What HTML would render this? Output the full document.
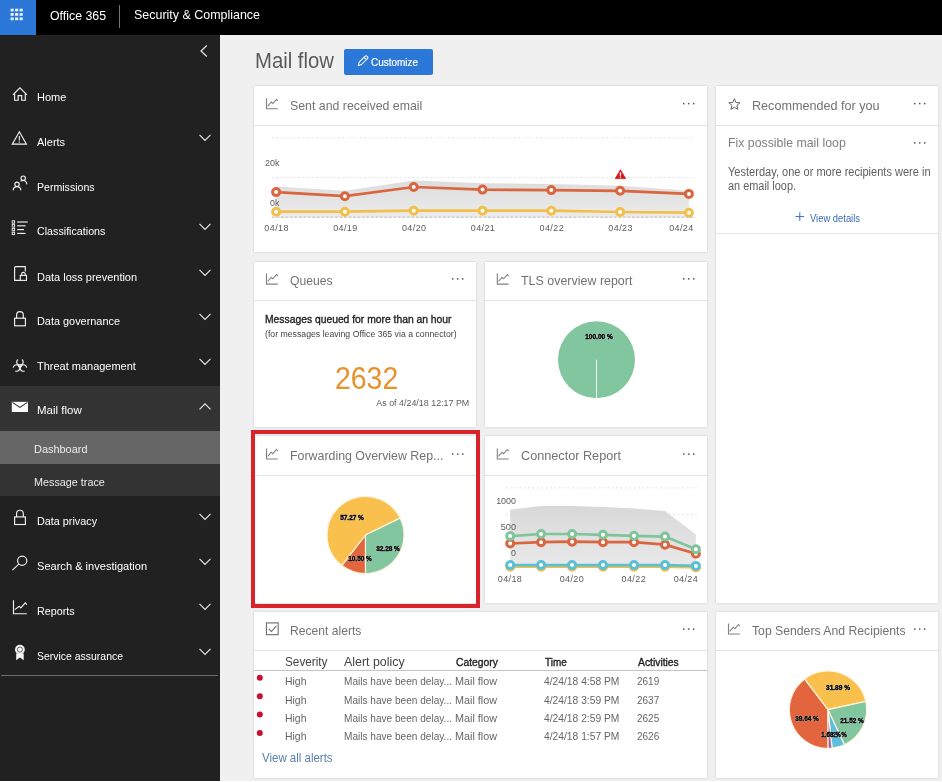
<!DOCTYPE html><html lang="en"><head><meta charset="utf-8"><title>Mail flow</title><style>
*{box-sizing:border-box;margin:0;padding:0}
html,body{width:942px;height:782px;overflow:hidden;background:#fff}
body{position:relative;font-family:"Liberation Sans",sans-serif;color:#333}
.a{position:absolute;white-space:nowrap;line-height:1}
#top{left:0;top:0;width:942px;height:35px;background:#000}
#waf{left:0;top:0;width:36px;height:35px;background:#2b78d8}
#side{left:0;top:35px;width:220px;height:746px;background:#212121}
#main{left:220px;top:35px;width:722px;height:746px;background:#f0f0f0}
.card{background:#fff;box-shadow:0 0 2px rgba(0,0,0,.18)}
.hsep{height:1px;background:#e3e3e3}
.nav{color:#fff;font-size:11.3px}
.ct{color:#727272;font-size:13.3px}
.dots{color:#555;font-size:12px;letter-spacing:1.5px;font-weight:bold}
svg{position:absolute;overflow:visible}
</style></head><body><div id="L" style="position:absolute;left:0;top:0;width:942px;height:782px;will-change:transform">
<div class="a" id="top"></div><div class="a" id="waf"></div>
<svg style="left:0;top:0" width="36" height="35"><rect x="10.6" y="8.7" width="3.1" height="2.7" fill="#eaf5ff"/><rect x="15.1" y="8.7" width="3.1" height="2.7" fill="#eaf5ff"/><rect x="19.6" y="8.7" width="3.1" height="2.7" fill="#eaf5ff"/><rect x="10.6" y="13.1" width="3.1" height="2.7" fill="#eaf5ff"/><rect x="15.1" y="13.1" width="3.1" height="2.7" fill="#eaf5ff"/><rect x="19.6" y="13.1" width="3.1" height="2.7" fill="#eaf5ff"/><rect x="10.6" y="17.5" width="3.1" height="2.7" fill="#eaf5ff"/><rect x="15.1" y="17.5" width="3.1" height="2.7" fill="#eaf5ff"/><rect x="19.6" y="17.5" width="3.1" height="2.7" fill="#eaf5ff"/></svg>
<div class="a" id="o365" style="left:49.5px;top:8.5px;color:#fff;font-size:13.3px;transform:scaleX(0.9275);transform-origin:left center">Office 365</div>
<div class="a" style="left:119px;top:5px;width:1px;height:23px;background:#767676"></div>
<div class="a" id="sc" style="left:133.5px;top:9.2px;color:#fff;font-size:12.2px;transform:scaleX(1.0221);transform-origin:left center">Security &amp; Compliance</div>
<div class="a" id="side"></div><div class="a" id="main"></div>
<div class="a" style="left:0;top:386px;width:220px;height:110.3px;background:#333"></div>
<div class="a" style="left:0;top:431.4px;width:220px;height:32.8px;background:#666"></div>
<div class="a" style="left:1px;top:675px;width:217px;height:1px;background:#6a6a6a"></div>
<svg style="left:200px;top:45px" width="8" height="12"><path d="M6.8 0.5 L1 6 L6.8 11.5" fill="none" stroke="#e6e6e6" stroke-width="1.2"/></svg>
<div class="a nav" id="n0" style="left:37px;top:91.8px;transform:scaleX(0.9721);transform-origin:left center">Home</div>
<div class="a nav" id="n1" style="left:37px;top:136.8px;transform:scaleX(0.9726);transform-origin:left center">Alerts</div>
<svg style="left:199px;top:133.8px" width="12" height="7"><path d="M0.5 0.8 L6 6.3 L11.5 0.8" fill="none" stroke="#e6e6e6" stroke-width="1.2"/></svg>
<div class="a nav" id="n2" style="left:37px;top:181.8px;transform:scaleX(0.9361);transform-origin:left center">Permissions</div>
<div class="a nav" id="n3" style="left:37px;top:226.4px;transform:scaleX(0.9473);transform-origin:left center">Classifications</div>
<svg style="left:199px;top:223.4px" width="12" height="7"><path d="M0.5 0.8 L6 6.3 L11.5 0.8" fill="none" stroke="#e6e6e6" stroke-width="1.2"/></svg>
<div class="a nav" id="n4" style="left:37px;top:271.6px;transform:scaleX(0.9718);transform-origin:left center">Data loss prevention</div>
<svg style="left:199px;top:268.6px" width="12" height="7"><path d="M0.5 0.8 L6 6.3 L11.5 0.8" fill="none" stroke="#e6e6e6" stroke-width="1.2"/></svg>
<div class="a nav" id="n5" style="left:37px;top:316.3px;transform:scaleX(0.9646);transform-origin:left center">Data governance</div>
<svg style="left:199px;top:313.3px" width="12" height="7"><path d="M0.5 0.8 L6 6.3 L11.5 0.8" fill="none" stroke="#e6e6e6" stroke-width="1.2"/></svg>
<div class="a nav" id="n6" style="left:37px;top:360.8px;transform:scaleX(0.9721);transform-origin:left center">Threat management</div>
<svg style="left:199px;top:357.8px" width="12" height="7"><path d="M0.5 0.8 L6 6.3 L11.5 0.8" fill="none" stroke="#e6e6e6" stroke-width="1.2"/></svg>
<div class="a nav" id="n7" style="left:37px;top:405.2px;transform:scaleX(1.017);transform-origin:left center">Mail flow</div>
<svg style="left:199px;top:403.1px" width="12" height="7"><path d="M0.5 6.3 L6 0.8 L11.5 6.3" fill="none" stroke="#e6e6e6" stroke-width="1.2"/></svg>
<div class="a nav" id="n8" style="left:37px;top:515.6px;transform:scaleX(0.9571);transform-origin:left center">Data privacy</div>
<svg style="left:199px;top:512.6px" width="12" height="7"><path d="M0.5 0.8 L6 6.3 L11.5 0.8" fill="none" stroke="#e6e6e6" stroke-width="1.2"/></svg>
<div class="a nav" id="n9" style="left:37px;top:560.8px;transform:scaleX(0.9795);transform-origin:left center">Search &amp; investigation</div>
<svg style="left:199px;top:557.8px" width="12" height="7"><path d="M0.5 0.8 L6 6.3 L11.5 0.8" fill="none" stroke="#e6e6e6" stroke-width="1.2"/></svg>
<div class="a nav" id="n10" style="left:37px;top:605.8px;transform:scaleX(0.9504);transform-origin:left center">Reports</div>
<svg style="left:199px;top:602.8px" width="12" height="7"><path d="M0.5 0.8 L6 6.3 L11.5 0.8" fill="none" stroke="#e6e6e6" stroke-width="1.2"/></svg>
<div class="a nav" id="n11" style="left:37px;top:651.1px;transform:scaleX(0.9254);transform-origin:left center">Service assurance</div>
<svg style="left:199px;top:648.1px" width="12" height="7"><path d="M0.5 0.8 L6 6.3 L11.5 0.8" fill="none" stroke="#e6e6e6" stroke-width="1.2"/></svg>
<div class="a nav" id="s0" style="color:#ececec;left:34px;top:444.1px;transform:scaleX(0.9681);transform-origin:left center">Dashboard</div>
<div class="a nav" id="s1" style="color:#ececec;left:34px;top:477.1px;transform:scaleX(0.9555);transform-origin:left center">Message trace</div>
<div class="a" id="ttl" style="left:255.3px;top:50.5px;font-size:21.5px;color:#5a5a5a;transform:scaleX(0.9445);transform-origin:left center">Mail flow</div>
<div class="a" style="left:344px;top:49px;width:89px;height:25.6px;background:#2b78d8;border-radius:2px"></div>
<div class="a" id="cust" style="left:371.2px;top:57px;font-size:11px;color:#fff;-webkit-text-stroke:0.2px #fff;transform:scaleX(0.9044);transform-origin:left center">Customize</div>
<div class="a card" style="left:254.0px;top:86.0px;width:453.4px;height:166.2px"></div>
<div class="a hsep" style="left:254.0px;top:125.0px;width:453.4px"></div>
<div class="a ct" id="t_sent" style="left:290.3px;top:98.7px;transform:scaleX(0.9274);transform-origin:left center">Sent and received email</div>
<div class="a card" style="left:716.0px;top:86.0px;width:222.4px;height:517.0px"></div>
<div class="a hsep" style="left:716.0px;top:125.0px;width:222.4px"></div>
<div class="a ct" id="t_rec" style="left:752.3px;top:98.7px;transform:scaleX(0.9478);transform-origin:left center">Recommended for you</div>
<div class="a card" style="left:254.0px;top:262.0px;width:222.4px;height:165.1px"></div>
<div class="a hsep" style="left:254.0px;top:300.0px;width:222.4px"></div>
<div class="a ct" id="t_q" style="left:290.3px;top:274.0px;transform:scaleX(0.9146);transform-origin:left center">Queues</div>
<div class="a card" style="left:484.8px;top:262.0px;width:222.6px;height:165.1px"></div>
<div class="a hsep" style="left:484.8px;top:300.0px;width:222.6px"></div>
<div class="a ct" id="t_tls" style="left:521.1px;top:274.0px;transform:scaleX(0.9363);transform-origin:left center">TLS overview report</div>
<div class="a card" style="left:254.0px;top:436.0px;width:222.4px;height:167.0px"></div>
<div class="a hsep" style="left:254.0px;top:475.0px;width:222.4px"></div>
<div class="a ct" id="t_fwd" style="left:290.3px;top:449.2px;transform:scaleX(0.9308);transform-origin:left center">Forwarding Overview Rep...</div>
<div class="a card" style="left:484.8px;top:436.0px;width:222.6px;height:167.0px"></div>
<div class="a hsep" style="left:484.8px;top:475.0px;width:222.6px"></div>
<div class="a ct" id="t_con" style="left:521.1px;top:449.2px;transform:scaleX(0.9527);transform-origin:left center">Connector Report</div>
<div class="a card" style="left:254.0px;top:611.5px;width:453.4px;height:166.5px"></div>
<div class="a hsep" style="left:254.0px;top:650.0px;width:453.4px"></div>
<div class="a ct" id="t_al" style="left:290.3px;top:624.2px;transform:scaleX(0.9114);transform-origin:left center">Recent alerts</div>
<div class="a card" style="left:716.0px;top:611.5px;width:222.4px;height:166.5px"></div>
<div class="a hsep" style="left:716.0px;top:650.0px;width:222.4px"></div>
<div class="a ct" id="t_top" style="left:752.3px;top:624.2px;transform:scaleX(0.9188);transform-origin:left center">Top Senders And Recipients</div>
<div class="a" style="left:250.6px;top:429.6px;width:229.3px;height:178.8px;border:4px solid #d9222a"></div>
<svg style="left:0;top:0" width="942" height="782" viewBox="0 0 942 782"><path d="M266.50 98.20 V108.80 H277.80" fill="none" stroke="#808080" stroke-width="1.1"/><path d="M267.70 106.20 L271.20 102.00 L272.80 103.50 L276.50 99.30 L277.80 100.90" fill="none" stroke="#808080" stroke-width="1.05"/><path d="M266.50 273.50 V284.10 H277.80" fill="none" stroke="#808080" stroke-width="1.1"/><path d="M267.70 281.50 L271.20 277.30 L272.80 278.80 L276.50 274.60 L277.80 276.20" fill="none" stroke="#808080" stroke-width="1.05"/><path d="M497.30 273.50 V284.10 H508.60" fill="none" stroke="#808080" stroke-width="1.1"/><path d="M498.50 281.50 L502.00 277.30 L503.60 278.80 L507.30 274.60 L508.60 276.20" fill="none" stroke="#808080" stroke-width="1.05"/><path d="M266.50 448.40 V459.00 H277.80" fill="none" stroke="#808080" stroke-width="1.1"/><path d="M267.70 456.40 L271.20 452.20 L272.80 453.70 L276.50 449.50 L277.80 451.10" fill="none" stroke="#808080" stroke-width="1.05"/><path d="M497.30 448.40 V459.00 H508.60" fill="none" stroke="#808080" stroke-width="1.1"/><path d="M498.50 456.40 L502.00 452.20 L503.60 453.70 L507.30 449.50 L508.60 451.10" fill="none" stroke="#808080" stroke-width="1.05"/><path d="M728.50 623.40 V634.00 H739.80" fill="none" stroke="#808080" stroke-width="1.1"/><path d="M729.70 631.40 L733.20 627.20 L734.80 628.70 L738.50 624.50 L739.80 626.10" fill="none" stroke="#808080" stroke-width="1.05"/><polygon points="734.40,98.70 735.93,102.50 740.01,102.78 736.87,105.40 737.87,109.37 734.40,107.20 730.93,109.37 731.93,105.40 728.79,102.78 732.87,102.50" fill="none" stroke="#666" stroke-width="1.0" stroke-linejoin="miter"/><rect x="266.4" y="622.9" width="11.8" height="11.8" fill="none" stroke="#6b6b6b" stroke-width="1.1"/><path d="M268.8 628.8 l2.6 2.7 l5 -5.6" fill="none" stroke="#6b6b6b" stroke-width="1.1"/><defs><linearGradient id="g1" x1="0" y1="0" x2="0" y2="1"><stop offset="0" stop-color="#dcdcdc"/><stop offset="1" stop-color="#ececec"/></linearGradient><linearGradient id="g2" x1="0" y1="0" x2="0" y2="1"><stop offset="0" stop-color="#d8d8d8"/><stop offset="1" stop-color="#e9e9e9"/></linearGradient></defs><line x1="271.8" y1="137.8" x2="694.6" y2="137.8" stroke="#e2e2e2" stroke-width="1" stroke-dasharray="2,2.4"/><line x1="271.8" y1="177.6" x2="694.6" y2="177.6" stroke="#e2e2e2" stroke-width="1" stroke-dasharray="2,2.4"/><polygon points="276.1,186.5 344.9,190.8 413.7,180.6 482.5,183.2 551.3,184.0 620.1,185.7 688.9,190.8 688.9,217 276.1,217" fill="url(#g1)"/><line x1="271.8" y1="217.2" x2="694.6" y2="217.2" stroke="#b5b5b5" stroke-width="1" stroke-dasharray="3,1.5"/><polyline points="276.1,211.7 344.9,211.7 413.7,210.7 482.5,210.7 551.3,210.7 620.1,212.0 688.9,212.7" fill="none" stroke="#f3bf4b" stroke-width="2.7"/><circle cx="276.1" cy="211.7" r="3.5" fill="#fff" stroke="#f3bf4b" stroke-width="3.0"/><circle cx="344.9" cy="211.7" r="3.5" fill="#fff" stroke="#f3bf4b" stroke-width="3.0"/><circle cx="413.7" cy="210.7" r="3.5" fill="#fff" stroke="#f3bf4b" stroke-width="3.0"/><circle cx="482.5" cy="210.7" r="3.5" fill="#fff" stroke="#f3bf4b" stroke-width="3.0"/><circle cx="551.3" cy="210.7" r="3.5" fill="#fff" stroke="#f3bf4b" stroke-width="3.0"/><circle cx="620.1" cy="212.0" r="3.5" fill="#fff" stroke="#f3bf4b" stroke-width="3.0"/><circle cx="688.9" cy="212.7" r="3.5" fill="#fff" stroke="#f3bf4b" stroke-width="3.0"/><polyline points="276.1,192.1 344.9,196.2 413.7,187.0 482.5,189.6 551.3,190.1 620.1,190.8 688.9,193.9" fill="none" stroke="#d9663f" stroke-width="2.7"/><circle cx="276.1" cy="192.1" r="3.5" fill="#fff" stroke="#d9663f" stroke-width="3.0"/><circle cx="344.9" cy="196.2" r="3.5" fill="#fff" stroke="#d9663f" stroke-width="3.0"/><circle cx="413.7" cy="187.0" r="3.5" fill="#fff" stroke="#d9663f" stroke-width="3.0"/><circle cx="482.5" cy="189.6" r="3.5" fill="#fff" stroke="#d9663f" stroke-width="3.0"/><circle cx="551.3" cy="190.1" r="3.5" fill="#fff" stroke="#d9663f" stroke-width="3.0"/><circle cx="620.1" cy="190.8" r="3.5" fill="#fff" stroke="#d9663f" stroke-width="3.0"/><circle cx="688.9" cy="193.9" r="3.5" fill="#fff" stroke="#d9663f" stroke-width="3.0"/><path d="M620.45 169.8 L625.6 178.6 L615.3 178.6 Z" fill="#d8141c" stroke="#d8141c" stroke-width="0.8" stroke-linejoin="round"/><rect x="619.8" y="172.2" width="1.3" height="3.6" fill="#fff"/><rect x="619.8" y="176.6" width="1.3" height="1.3" fill="#fff"/><circle cx="596.5" cy="359.7" r="38.5" fill="#82c6a0"/><line x1="596.5" y1="359.7" x2="596.5" y2="398" stroke="#fff" stroke-width="0.9"/><path d="M365.50 535.00 L365.50 573.50 A38.50 38.50 0 0 1 341.90 565.42 Z" fill="#e2653e" stroke="#fff3dc" stroke-width="1.2" stroke-linejoin="round"/><path d="M365.50 535.00 L341.90 565.42 A38.50 38.50 0 1 1 400.10 518.11 Z" fill="#f9c04d" stroke="#fff3dc" stroke-width="1.2" stroke-linejoin="round"/><path d="M365.50 535.00 L400.10 518.11 A38.50 38.50 0 0 1 365.50 573.50 Z" fill="#82c6a0" stroke="#fff3dc" stroke-width="1.2" stroke-linejoin="round"/><path d="M828.00 709.70 L828.00 748.40 A38.70 38.70 0 0 1 804.55 678.91 Z" fill="#e2653e" stroke="#fff3dc" stroke-width="1.2" stroke-linejoin="round"/><path d="M828.00 709.70 L804.55 678.91 A38.70 38.70 0 0 1 865.78 701.33 Z" fill="#f9c04d" stroke="#fff3dc" stroke-width="1.2" stroke-linejoin="round"/><path d="M828.00 709.70 L865.78 701.33 A38.70 38.70 0 0 1 844.37 744.77 Z" fill="#82c6a0" stroke="#fff3dc" stroke-width="1.2" stroke-linejoin="round"/><path d="M828.00 709.70 L844.37 744.77 A38.70 38.70 0 0 1 832.08 748.18 Z" fill="#5bbfe0" stroke="#fff3dc" stroke-width="1.2" stroke-linejoin="round"/><path d="M828.00 709.70 L832.08 748.18 A38.70 38.70 0 0 1 828.00 748.40 Z" fill="#9b6aa8" stroke="#fff3dc" stroke-width="1.2" stroke-linejoin="round"/><line x1="506" y1="487.9" x2="699" y2="487.9" stroke="#e2e2e2" stroke-width="1" stroke-dasharray="2,2.4"/><line x1="506" y1="514.7" x2="699" y2="514.7" stroke="#e2e2e2" stroke-width="1" stroke-dasharray="2,2.4"/><polygon points="510.2,509.8 541.1,506.0 572.1,506.0 603.0,507.0 634.0,508.6 665.0,511.1 695.9,534.6 695.9,567 510.2,567" fill="url(#g2)"/><polyline points="510.2,566.7 541.1,566.7 572.1,566.7 603.0,566.7 634.0,566.7 665.0,566.7 695.9,567.5" fill="none" stroke="#f3bf4b" stroke-width="2.7"/><circle cx="510.2" cy="566.7" r="3.5" fill="#fff" stroke="#f3bf4b" stroke-width="3.0"/><circle cx="541.1" cy="566.7" r="3.5" fill="#fff" stroke="#f3bf4b" stroke-width="3.0"/><circle cx="572.1" cy="566.7" r="3.5" fill="#fff" stroke="#f3bf4b" stroke-width="3.0"/><circle cx="603.0" cy="566.7" r="3.5" fill="#fff" stroke="#f3bf4b" stroke-width="3.0"/><circle cx="634.0" cy="566.7" r="3.5" fill="#fff" stroke="#f3bf4b" stroke-width="3.0"/><circle cx="665.0" cy="566.7" r="3.5" fill="#fff" stroke="#f3bf4b" stroke-width="3.0"/><circle cx="695.9" cy="567.5" r="3.5" fill="#fff" stroke="#f3bf4b" stroke-width="3.0"/><polyline points="510.2,543.5 541.1,542.2 572.1,541.7 603.0,542.2 634.0,542.2 665.0,544.7 695.9,553.7" fill="none" stroke="#d9663f" stroke-width="2.7"/><circle cx="510.2" cy="543.5" r="3.5" fill="#fff" stroke="#d9663f" stroke-width="3.0"/><circle cx="541.1" cy="542.2" r="3.5" fill="#fff" stroke="#d9663f" stroke-width="3.0"/><circle cx="572.1" cy="541.7" r="3.5" fill="#fff" stroke="#d9663f" stroke-width="3.0"/><circle cx="603.0" cy="542.2" r="3.5" fill="#fff" stroke="#d9663f" stroke-width="3.0"/><circle cx="634.0" cy="542.2" r="3.5" fill="#fff" stroke="#d9663f" stroke-width="3.0"/><circle cx="665.0" cy="544.7" r="3.5" fill="#fff" stroke="#d9663f" stroke-width="3.0"/><circle cx="695.9" cy="553.7" r="3.5" fill="#fff" stroke="#d9663f" stroke-width="3.0"/><polyline points="510.2,536.1 541.1,534.0 572.1,534.0 603.0,534.8 634.0,535.8 665.0,536.6 695.9,549.3" fill="none" stroke="#7fc49c" stroke-width="2.7"/><circle cx="510.2" cy="536.1" r="3.5" fill="#fff" stroke="#7fc49c" stroke-width="3.0"/><circle cx="541.1" cy="534.0" r="3.5" fill="#fff" stroke="#7fc49c" stroke-width="3.0"/><circle cx="572.1" cy="534.0" r="3.5" fill="#fff" stroke="#7fc49c" stroke-width="3.0"/><circle cx="603.0" cy="534.8" r="3.5" fill="#fff" stroke="#7fc49c" stroke-width="3.0"/><circle cx="634.0" cy="535.8" r="3.5" fill="#fff" stroke="#7fc49c" stroke-width="3.0"/><circle cx="665.0" cy="536.6" r="3.5" fill="#fff" stroke="#7fc49c" stroke-width="3.0"/><circle cx="695.9" cy="549.3" r="3.5" fill="#fff" stroke="#7fc49c" stroke-width="3.0"/><polyline points="510.2,565.1 541.1,565.1 572.1,565.1 603.0,565.1 634.0,565.1 665.0,565.1 695.9,565.9" fill="none" stroke="#5bbfd6" stroke-width="2.7"/><circle cx="510.2" cy="565.1" r="3.5" fill="#fff" stroke="#5bbfd6" stroke-width="3.0"/><circle cx="541.1" cy="565.1" r="3.5" fill="#fff" stroke="#5bbfd6" stroke-width="3.0"/><circle cx="572.1" cy="565.1" r="3.5" fill="#fff" stroke="#5bbfd6" stroke-width="3.0"/><circle cx="603.0" cy="565.1" r="3.5" fill="#fff" stroke="#5bbfd6" stroke-width="3.0"/><circle cx="634.0" cy="565.1" r="3.5" fill="#fff" stroke="#5bbfd6" stroke-width="3.0"/><circle cx="665.0" cy="565.1" r="3.5" fill="#fff" stroke="#5bbfd6" stroke-width="3.0"/><circle cx="695.9" cy="565.9" r="3.5" fill="#fff" stroke="#5bbfd6" stroke-width="3.0"/><line x1="254" y1="670.5" x2="707.4" y2="670.5" stroke="#c4c4c4" stroke-width="1"/><circle cx="259.8" cy="677.7" r="3" fill="#c8102e"/><circle cx="259.8" cy="696.3" r="3" fill="#c8102e"/><circle cx="259.8" cy="714.6" r="3" fill="#c8102e"/><circle cx="259.8" cy="733.0" r="3" fill="#c8102e"/><path d="M795.5 216.6 h8.6 M799.8 212.3 v8.6" stroke="#3b6fb5" stroke-width="1" fill="none"/><path transform="translate(-0.9,-1.2)" d="M359.2 66.6 l0.9 -3.2 l6.1 -6.1 a1.1 1.1 0 0 1 1.6 0 l0.7 0.7 a1.1 1.1 0 0 1 0 1.6 l-6.1 6.1 Z M365 58.6 l2.3 2.3" fill="none" stroke="#fff" stroke-width="1.05" stroke-linejoin="round"/></svg>
<svg style="left:0;top:0" width="942" height="782" viewBox="0 0 942 782"><rect x="682.95" y="102.85" width="1.5" height="1.5" fill="#555"/><rect x="687.95" y="102.85" width="1.5" height="1.5" fill="#555"/><rect x="692.95" y="102.85" width="1.5" height="1.5" fill="#555"/><rect x="913.95" y="102.85" width="1.5" height="1.5" fill="#555"/><rect x="918.95" y="102.85" width="1.5" height="1.5" fill="#555"/><rect x="923.95" y="102.85" width="1.5" height="1.5" fill="#555"/><rect x="451.95" y="278.15" width="1.5" height="1.5" fill="#555"/><rect x="456.95" y="278.15" width="1.5" height="1.5" fill="#555"/><rect x="461.95" y="278.15" width="1.5" height="1.5" fill="#555"/><rect x="682.95" y="278.15" width="1.5" height="1.5" fill="#555"/><rect x="687.95" y="278.15" width="1.5" height="1.5" fill="#555"/><rect x="692.95" y="278.15" width="1.5" height="1.5" fill="#555"/><rect x="451.95" y="453.35" width="1.5" height="1.5" fill="#555"/><rect x="456.95" y="453.35" width="1.5" height="1.5" fill="#555"/><rect x="461.95" y="453.35" width="1.5" height="1.5" fill="#555"/><rect x="682.95" y="453.35" width="1.5" height="1.5" fill="#555"/><rect x="687.95" y="453.35" width="1.5" height="1.5" fill="#555"/><rect x="692.95" y="453.35" width="1.5" height="1.5" fill="#555"/><rect x="682.95" y="628.35" width="1.5" height="1.5" fill="#555"/><rect x="687.95" y="628.35" width="1.5" height="1.5" fill="#555"/><rect x="692.95" y="628.35" width="1.5" height="1.5" fill="#555"/><rect x="913.95" y="628.35" width="1.5" height="1.5" fill="#555"/><rect x="918.95" y="628.35" width="1.5" height="1.5" fill="#555"/><rect x="923.95" y="628.35" width="1.5" height="1.5" fill="#555"/><rect x="913.95" y="142.15" width="1.5" height="1.5" fill="#555"/><rect x="918.95" y="142.15" width="1.5" height="1.5" fill="#555"/><rect x="923.95" y="142.15" width="1.5" height="1.5" fill="#555"/></svg>
<div class="a" id="l20k" style="right:662.4px;top:159.0px;font-size:9px;color:#5c5c5c;;transform:scaleX(0.9989);transform-origin:right center">20k</div>
<div class="a" id="l0k" style="right:662.4px;top:198.5px;font-size:9px;color:#5c5c5c;;transform:scaleX(0.9878);transform-origin:right center">0k</div>
<div class="a" id="sx0" style="left:236.6px;top:224.0px;width:80px;text-align:center;font-size:9px;color:#5c5c5c;letter-spacing:0.4px">04/18</div>
<div class="a" id="sx1" style="left:305.4px;top:224.0px;width:80px;text-align:center;font-size:9px;color:#5c5c5c;letter-spacing:0.4px">04/19</div>
<div class="a" id="sx2" style="left:374.2px;top:224.0px;width:80px;text-align:center;font-size:9px;color:#5c5c5c;letter-spacing:0.4px">04/20</div>
<div class="a" id="sx3" style="left:443.0px;top:224.0px;width:80px;text-align:center;font-size:9px;color:#5c5c5c;letter-spacing:0.4px">04/21</div>
<div class="a" id="sx4" style="left:511.8px;top:224.0px;width:80px;text-align:center;font-size:9px;color:#5c5c5c;letter-spacing:0.4px">04/22</div>
<div class="a" id="sx5" style="left:580.6px;top:224.0px;width:80px;text-align:center;font-size:9px;color:#5c5c5c;letter-spacing:0.4px">04/23</div>
<div class="a" id="sx6" style="left:641.4px;top:224.0px;width:80px;text-align:center;font-size:9px;color:#5c5c5c;letter-spacing:0.4px">04/24</div>
<div class="a" id="q1" style="left:265.4px;top:314.0px;font-size:11px;color:#222;-webkit-text-stroke:0.35px #222;transform:scaleX(0.9384);transform-origin:left center">Messages queued for more than an hour</div>
<div class="a" id="q2" style="left:265.4px;top:330.2px;font-size:8.5px;color:#444;;transform:scaleX(1.0249);transform-origin:left center">(for messages leaving Office 365 via a connector)</div>
<div class="a" id="q3" style="left:335.4px;top:362.0px;font-size:32px;color:#e8912d;;transform:scaleX(0.8878);transform-origin:left center">2632</div>
<div class="a" id="q4" style="right:472.6px;top:398.2px;font-size:9.6px;color:#5e5e5e;;transform:scaleX(0.9274);transform-origin:right center">As of 4/24/18 12:17 PM</div>
<div class="a" id="p1" style="left:558.8px;top:333.3px;width:80px;text-align:center;font-size:7px;color:#000;font-weight:bold;-webkit-text-stroke:0.45px #000;text-shadow:0 0 1px #fff,0 0 1.5px #fff;;transform:scaleX(0.9326);transform-origin:center center">100.00 %</div>
<div class="a" id="p2" style="left:312.0px;top:514.3px;width:80px;text-align:center;font-size:7px;color:#000;font-weight:bold;-webkit-text-stroke:0.45px #000;text-shadow:0 0 1px #fff,0 0 1.5px #fff;;transform:scaleX(0.9226);transform-origin:center center">57.27 %</div>
<div class="a" id="p3" style="left:347.7px;top:545.4px;width:80px;text-align:center;font-size:7px;color:#000;font-weight:bold;-webkit-text-stroke:0.45px #000;text-shadow:0 0 1px #fff,0 0 1.5px #fff;;transform:scaleX(0.9226);transform-origin:center center">32.28 %</div>
<div class="a" id="p4" style="left:319.8px;top:555.0px;width:80px;text-align:center;font-size:7px;color:#000;font-weight:bold;-webkit-text-stroke:0.45px #000;text-shadow:0 0 1px #fff,0 0 1.5px #fff;;transform:scaleX(0.9226);transform-origin:center center">10.50 %</div>
<div class="a" id="p5" style="left:798.3px;top:684.1px;width:80px;text-align:center;font-size:7px;color:#000;font-weight:bold;-webkit-text-stroke:0.45px #000;text-shadow:0 0 1px #fff,0 0 1.5px #fff;;transform:scaleX(0.9343);transform-origin:center center">31.89 %</div>
<div class="a" id="p6" style="left:766.9px;top:715.1px;width:80px;text-align:center;font-size:7px;color:#000;font-weight:bold;-webkit-text-stroke:0.45px #000;text-shadow:0 0 1px #fff,0 0 1.5px #fff;;transform:scaleX(0.9187);transform-origin:center center">39.64 %</div>
<div class="a" id="p7" style="left:811.6px;top:716.8px;width:80px;text-align:center;font-size:7px;color:#000;font-weight:bold;-webkit-text-stroke:0.45px #000;text-shadow:0 0 1px #fff,0 0 1.5px #fff;;transform:scaleX(0.9187);transform-origin:center center">21.52 %</div>
<div class="a" id="p9" style="left:797.1px;top:731.0px;width:80px;text-align:center;font-size:7px;color:#000;font-weight:bold;-webkit-text-stroke:0.45px #000;text-shadow:0 0 1px #fff,0 0 1.5px #fff;;transform:scaleX(0.89);transform-origin:center center">5.27 %</div>
<div class="a" id="p8" style="left:791.0px;top:731.0px;width:80px;text-align:center;font-size:7px;color:#000;font-weight:bold;-webkit-text-stroke:0.45px #000;text-shadow:0 0 1px #fff,0 0 1.5px #fff;;transform:scaleX(0.89);transform-origin:center center">1.68 %</div>
<div class="a" id="c1" style="right:426.0px;top:496.6px;font-size:9px;color:#5c5c5c;;transform:scaleX(0.9934);transform-origin:right center">1000</div>
<div class="a" id="c2" style="right:426.0px;top:523.2px;font-size:9px;color:#5c5c5c;;transform:scaleX(1.0179);transform-origin:right center">500</div>
<div class="a" id="c3" style="right:426.0px;top:549.2px;font-size:9px;color:#5c5c5c;;transform:scaleX(0.9969);transform-origin:right center">0</div>
<div class="a" id="cx0" style="left:470.0px;top:574.8px;width:80px;text-align:center;font-size:9px;color:#5c5c5c;letter-spacing:0.4px">04/18</div>
<div class="a" id="cx2" style="left:531.9px;top:574.8px;width:80px;text-align:center;font-size:9px;color:#5c5c5c;letter-spacing:0.4px">04/20</div>
<div class="a" id="cx4" style="left:593.8px;top:574.8px;width:80px;text-align:center;font-size:9px;color:#5c5c5c;letter-spacing:0.4px">04/22</div>
<div class="a" id="cx6" style="left:645.9px;top:574.8px;width:80px;text-align:center;font-size:9px;color:#5c5c5c;letter-spacing:0.4px">04/24</div>
<div class="a" id="r1" style="left:728.1px;top:136.2px;font-size:13.3px;color:#808080;;transform:scaleX(0.9266);transform-origin:left center">Fix possible mail loop</div>
<div class="a" id="r2" style="left:728.1px;top:166.3px;font-size:12px;color:#606060;;transform:scaleX(0.9204);transform-origin:left center">Yesterday, one or more recipients were in</div>
<div class="a" id="r3" style="left:728.1px;top:180.3px;font-size:12px;color:#606060;;transform:scaleX(0.9101);transform-origin:left center">an email loop.</div>
<div class="a" id="r4" style="left:810.2px;top:212.9px;font-size:10.5px;color:#3b6fb5;;transform:scaleX(0.8954);transform-origin:left center">View details</div>
<div class="a hsep" style="left:716px;top:232.5px;width:222.4px"></div>
<div class="a" id="h1" style="left:284.5px;top:656.2px;font-size:12px;color:#444;;transform:scaleX(0.9802);transform-origin:left center">Severity</div>
<div class="a" id="h2" style="left:344.4px;top:656.2px;font-size:12px;color:#444;;transform:scaleX(1.0326);transform-origin:left center">Alert policy</div>
<div class="a" id="h3" style="left:456.0px;top:656.8px;font-size:10.5px;color:#222;-webkit-text-stroke:0.35px #222;transform:scaleX(0.9857);transform-origin:left center">Category</div>
<div class="a" id="h4" style="left:545.0px;top:656.8px;font-size:10.5px;color:#222;-webkit-text-stroke:0.35px #222;transform:scaleX(0.9454);transform-origin:left center">Time</div>
<div class="a" id="h5" style="left:638.0px;top:656.8px;font-size:10.5px;color:#222;-webkit-text-stroke:0.35px #222;transform:scaleX(0.9846);transform-origin:left center">Activities</div>
<div class="a" id="a0_1" style="left:284.5px;top:676.3px;font-size:11.5px;color:#666;;transform:scaleX(0.9089);transform-origin:left center">High</div>
<div class="a" id="a0_2" style="left:343.9px;top:676.3px;font-size:11.5px;color:#666;;transform:scaleX(0.8768);transform-origin:left center">Mails have been delay...</div>
<div class="a" id="a0_3" style="left:455.4px;top:676.3px;font-size:11.5px;color:#666;;transform:scaleX(0.9389);transform-origin:left center">Mail flow</div>
<div class="a" id="a0_4" style="left:544.3px;top:676.3px;font-size:11.5px;color:#666;;transform:scaleX(0.8933);transform-origin:left center">4/24/18 4:58 PM</div>
<div class="a" id="a0_5" style="left:636.8px;top:676.3px;font-size:11.5px;color:#666;;transform:scaleX(0.8674);transform-origin:left center">2619</div>
<div class="a" id="a1_1" style="left:284.5px;top:694.7px;font-size:11.5px;color:#666;;transform:scaleX(0.9089);transform-origin:left center">High</div>
<div class="a" id="a1_2" style="left:343.9px;top:694.7px;font-size:11.5px;color:#666;;transform:scaleX(0.8768);transform-origin:left center">Mails have been delay...</div>
<div class="a" id="a1_3" style="left:455.4px;top:694.7px;font-size:11.5px;color:#666;;transform:scaleX(0.9389);transform-origin:left center">Mail flow</div>
<div class="a" id="a1_4" style="left:544.3px;top:694.7px;font-size:11.5px;color:#666;;transform:scaleX(0.8933);transform-origin:left center">4/24/18 3:59 PM</div>
<div class="a" id="a1_5" style="left:636.8px;top:694.7px;font-size:11.5px;color:#666;;transform:scaleX(0.8674);transform-origin:left center">2637</div>
<div class="a" id="a2_1" style="left:284.5px;top:712.8px;font-size:11.5px;color:#666;;transform:scaleX(0.9089);transform-origin:left center">High</div>
<div class="a" id="a2_2" style="left:343.9px;top:712.8px;font-size:11.5px;color:#666;;transform:scaleX(0.8768);transform-origin:left center">Mails have been delay...</div>
<div class="a" id="a2_3" style="left:455.4px;top:712.8px;font-size:11.5px;color:#666;;transform:scaleX(0.9389);transform-origin:left center">Mail flow</div>
<div class="a" id="a2_4" style="left:544.3px;top:712.8px;font-size:11.5px;color:#666;;transform:scaleX(0.8933);transform-origin:left center">4/24/18 2:59 PM</div>
<div class="a" id="a2_5" style="left:636.8px;top:712.8px;font-size:11.5px;color:#666;;transform:scaleX(0.8674);transform-origin:left center">2625</div>
<div class="a" id="a3_1" style="left:284.5px;top:731.1px;font-size:11.5px;color:#666;;transform:scaleX(0.9089);transform-origin:left center">High</div>
<div class="a" id="a3_2" style="left:343.9px;top:731.1px;font-size:11.5px;color:#666;;transform:scaleX(0.8768);transform-origin:left center">Mails have been delay...</div>
<div class="a" id="a3_3" style="left:455.4px;top:731.1px;font-size:11.5px;color:#666;;transform:scaleX(0.9389);transform-origin:left center">Mail flow</div>
<div class="a" id="a3_4" style="left:544.3px;top:731.1px;font-size:11.5px;color:#666;;transform:scaleX(0.8933);transform-origin:left center">4/24/18 1:57 PM</div>
<div class="a" id="a3_5" style="left:636.8px;top:731.1px;font-size:11.5px;color:#666;;transform:scaleX(0.8674);transform-origin:left center">2626</div>
<div class="a" id="va" style="left:262.3px;top:751.8px;font-size:12px;color:#5a7fb0;;transform:scaleX(0.9565);transform-origin:left center">View all alerts</div>
<svg style="left:0;top:0" width="60" height="782" viewBox="0 0 60 782"><path d="M12.9 94.9 L19.95 87.9 L27 94.9" fill="none" stroke="#f2f2f2" stroke-width="1.15" /><path d="M14.6 93.6 V100.2 H18.2 V95.6 H21.7 V100.2 H25.3 V93.6" fill="none" stroke="#f2f2f2" stroke-width="1.15" /><path d="M19.35 131.8 L26.4 144.1 H12.3 Z" fill="none" stroke="#f2f2f2" stroke-width="1.15" stroke-linejoin="miter"/><path d="M19.35 136 V140.6 M19.35 141.6 V142.8" fill="none" stroke="#f2f2f2" stroke-width="1.1" /><circle cx="23.2" cy="178.2" r="2.2" fill="none" stroke="#f2f2f2" stroke-width="1.1"/><circle cx="17" cy="184.3" r="2.2" fill="none" stroke="#f2f2f2" stroke-width="1.1"/><path d="M13.1 190.4 C13.4 187.6 15 186.6 17 186.6 C19 186.6 20.6 187.6 20.9 190.4" fill="none" stroke="#f2f2f2" stroke-width="1.15" /><path d="M20.6 181.2 C21.4 180.6 22.2 180.5 23.2 180.5 C25.2 180.5 26.6 181.6 26.9 184.4" fill="none" stroke="#f2f2f2" stroke-width="1.15" /><rect x="12.2" y="220.8" width="2.4" height="2.4" fill="none" stroke="#f2f2f2" stroke-width="0.9"/><line x1="17.2" y1="222.0" x2="27.8" y2="222.0" stroke="#f2f2f2" stroke-width="1.15"/><rect x="12.2" y="224.6" width="2.4" height="2.4" fill="none" stroke="#f2f2f2" stroke-width="0.9"/><line x1="17.2" y1="225.8" x2="25.6" y2="225.8" stroke="#f2f2f2" stroke-width="1.15"/><rect x="12.2" y="228.4" width="2.4" height="2.4" fill="none" stroke="#f2f2f2" stroke-width="0.9"/><line x1="17.2" y1="229.6" x2="24.0" y2="229.6" stroke="#f2f2f2" stroke-width="1.15"/><rect x="12.2" y="232.2" width="2.4" height="2.4" fill="none" stroke="#f2f2f2" stroke-width="0.9"/><line x1="17.2" y1="233.4" x2="25.6" y2="233.4" stroke="#f2f2f2" stroke-width="1.15"/><path d="M20 280.3 H14.6 V267.8 Q14.6 266.6 15.8 266.6 H25.3 V271.6" fill="none" stroke="#f2f2f2" stroke-width="1.15" /><rect x="20.3" y="275.4" width="6.2" height="5" fill="#212121" stroke="#f2f2f2" stroke-width="1.1"/><path d="M21.6 275.2 V274.2 A1.8 1.8 0 0 1 25.2 274.2 V275.2" fill="none" stroke="#f2f2f2" stroke-width="1.15" /><rect x="14.6" y="318.2" width="10.8" height="7.6" fill="none" stroke="#f2f2f2" stroke-width="1.15"/><path d="M16.6 318.2 V314.9 A3.35 3.35 0 0 1 23.3 314.9 V318.2" fill="none" stroke="#f2f2f2" stroke-width="1.15" /><rect x="14.6" y="516.9" width="10.8" height="7.6" fill="none" stroke="#f2f2f2" stroke-width="1.15"/><path d="M16.6 516.9 V513.6 A3.35 3.35 0 0 1 23.3 513.6 V516.9" fill="none" stroke="#f2f2f2" stroke-width="1.15" /><path d="M21.95 359.44 A3.25 3.25 0 1 1 17.95 359.44" fill="none" stroke="#f2f2f2" stroke-width="1.15"/><path d="M24.63 371.01 A3.25 3.25 0 1 1 26.63 367.55" fill="none" stroke="#f2f2f2" stroke-width="1.15"/><path d="M13.27 367.55 A3.25 3.25 0 1 1 15.27 371.01" fill="none" stroke="#f2f2f2" stroke-width="1.15"/><circle cx="19.95" cy="366.00" r="1.6" fill="none" stroke="#f2f2f2" stroke-width="0.9"/><rect x="11.8" y="401.8" width="16.2" height="10.2" fill="#fafafa"/><path d="M12.4 402.4 L19.9 407.4 L27.4 402.4" fill="none" stroke="#333" stroke-width="1.1"/><circle cx="22.2" cy="560.7" r="4.6" fill="none" stroke="#f2f2f2" stroke-width="1.15"/><path d="M18.8 564.2 L12.4 570.1" fill="none" stroke="#f2f2f2" stroke-width="1.15" /><path d="M13.5 600.2 V613.7 H26.8" fill="none" stroke="#f2f2f2" stroke-width="1.15" /><path d="M14.8 609.6 L19.2 606.2 L20.8 607.8 L25.2 602.8 L26.8 604.6" fill="none" stroke="#f2f2f2" stroke-width="1.15" /><circle cx="19.9" cy="649.6" r="4.9" fill="#f5f5f5"/><circle cx="19.9" cy="649.6" r="2.6" fill="none" stroke="#555" stroke-width="0.9"/><path d="M16.2 653.6 H23.7 V660.2 L19.95 657.6 L16.2 660.2 Z" fill="#f5f5f5"/></svg>
</div></body></html>
